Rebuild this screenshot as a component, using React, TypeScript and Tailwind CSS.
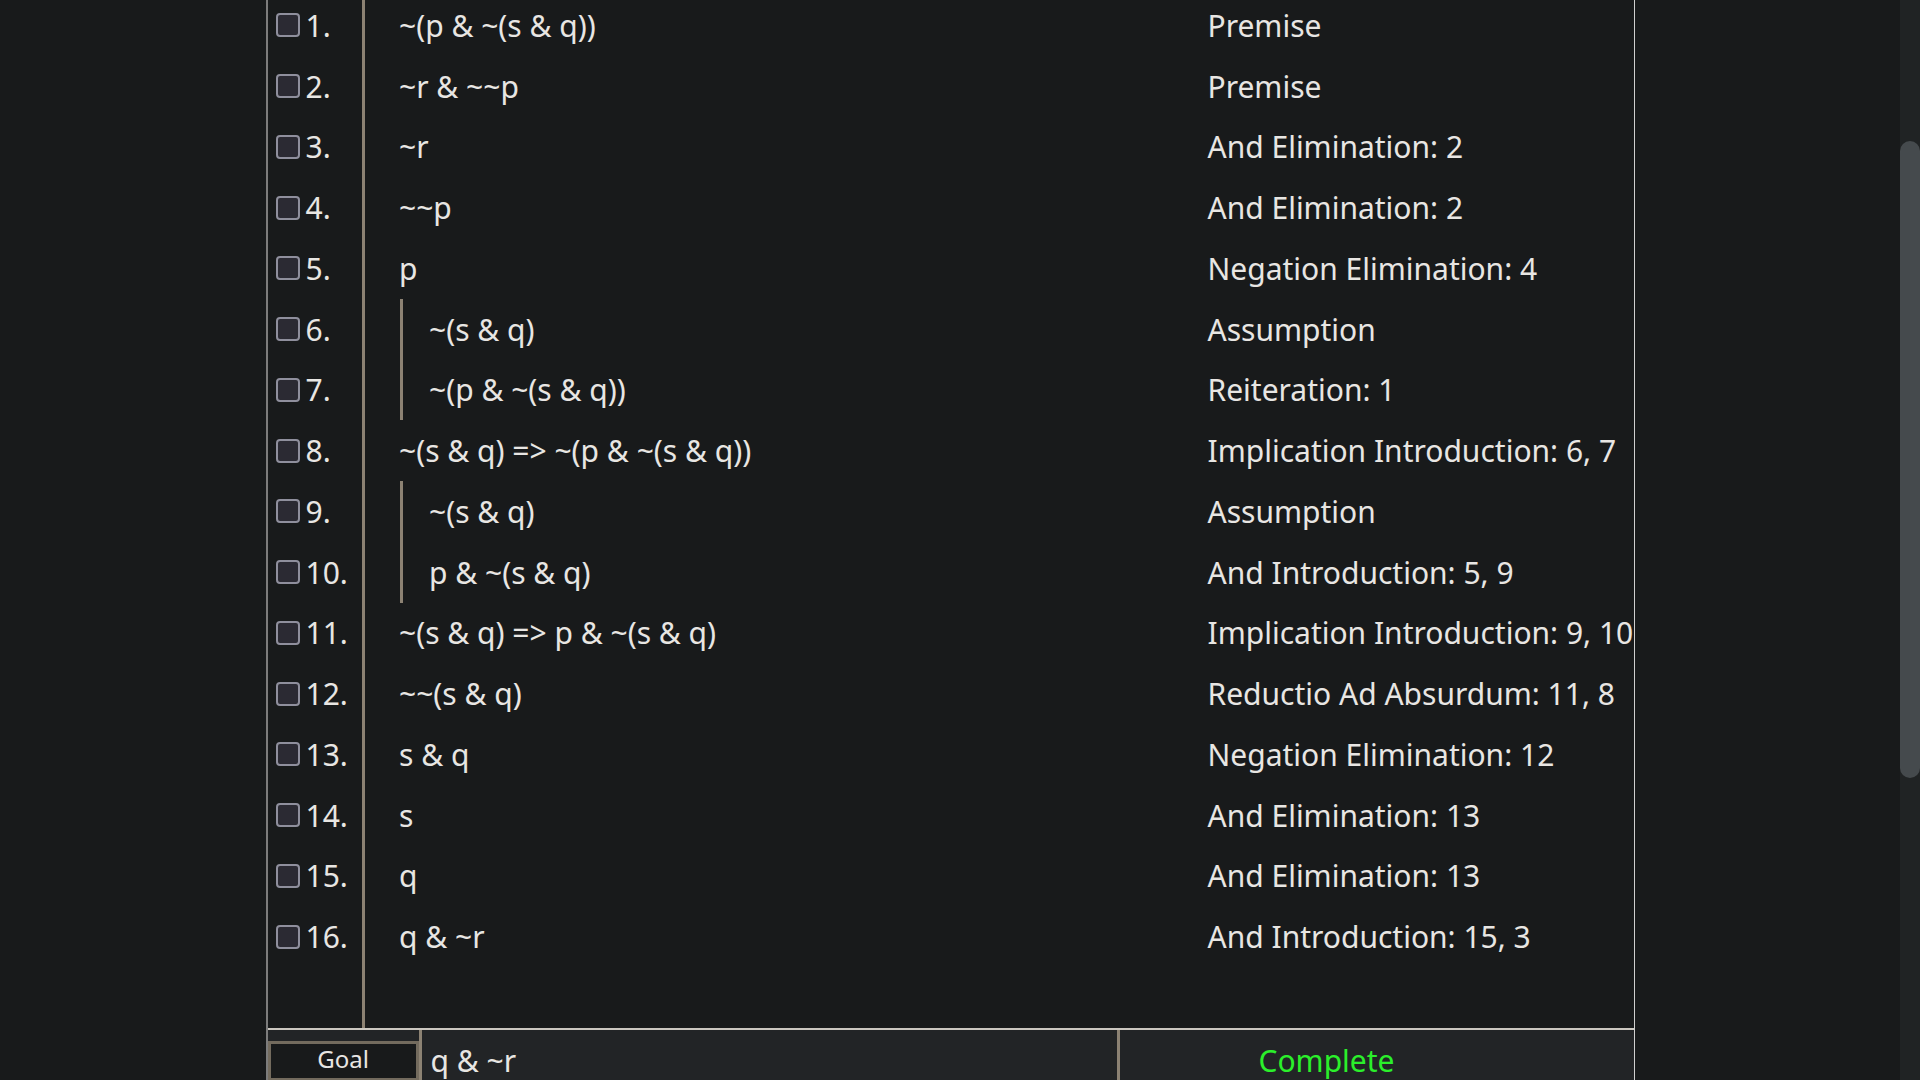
type Row = { n: number; f: string; j: string; d: number };

const rows: Row[] = [
  { n: 1, f: "~(p & ~(s & q))", j: "Premise", d: 0 },
  { n: 2, f: "~r & ~~p", j: "Premise", d: 0 },
  { n: 3, f: "~r", j: "And Elimination: 2", d: 0 },
  { n: 4, f: "~~p", j: "And Elimination: 2", d: 0 },
  { n: 5, f: "p", j: "Negation Elimination: 4", d: 0 },
  { n: 6, f: "~(s & q)", j: "Assumption", d: 1 },
  { n: 7, f: "~(p & ~(s & q))", j: "Reiteration: 1", d: 1 },
  { n: 8, f: "~(s & q) => ~(p & ~(s & q))", j: "Implication Introduction: 6, 7", d: 0 },
  { n: 9, f: "~(s & q)", j: "Assumption", d: 1 },
  { n: 10, f: "p & ~(s & q)", j: "And Introduction: 5, 9", d: 1 },
  { n: 11, f: "~(s & q) => p & ~(s & q)", j: "Implication Introduction: 9, 10", d: 0 },
  { n: 12, f: "~~(s & q)", j: "Reductio Ad Absurdum: 11, 8", d: 0 },
  { n: 13, f: "s & q", j: "Negation Elimination: 12", d: 0 },
  { n: 14, f: "s", j: "And Elimination: 13", d: 0 },
  { n: 15, f: "q", j: "And Elimination: 13", d: 0 },
  { n: 16, f: "q & ~r", j: "And Introduction: 15, 3", d: 0 },
];

function ProofRow({ r }: { r: Row }) {
  return (
    <div className="flex h-[60.75px]">
      <div className="flex w-[97px] shrink-0 items-center border-r-[3px] border-[#8c8273] pl-[8px]">
        <input
          type="checkbox"
          className="h-6 w-6 shrink-0 appearance-none rounded-[4px] border-2 border-[#8f8f9d] bg-[#2b2a33]"
        />
        <span className="ml-[6px]">{r.n}.</span>
      </div>
      <div className="flex w-[843px] shrink-0">
        {r.d === 0 ? (
          <div className="flex items-center whitespace-pre pl-[34.5px]">{r.f}</div>
        ) : (
          <div className="ml-[35px] flex items-center whitespace-pre border-l-[3px] border-[#8c8273] pl-[26.5px]">
            {r.f}
          </div>
        )}
      </div>
      <div className="flex flex-1 items-center whitespace-pre">{r.j}</div>
    </div>
  );
}

export default function App() {
  return (
    <div className="flex h-screen overflow-hidden bg-[#181a1b] text-[30px] text-[#e8e6e3] [font-family:'Noto_Sans',sans-serif]">
      <main className="min-w-0 flex-1 overflow-hidden">
        <div className="-mt-[5px] mx-auto w-[1369px] border-l-2 border-r border-l-[#7c7c7c] border-r-[#cfcfcf]">
          {rows.map((r) => (
            <ProofRow key={r.n} r={r} />
          ))}
          <div className="flex h-[60.75px]">
            <div className="w-[97px] shrink-0 border-r-[3px] border-[#8c8273]" />
          </div>
          <div className="flex h-[80px] border-t-2 border-[#cbc7c0] bg-[#222426]">
            <div className="w-[151px] shrink-0 pt-[11px]">
              <div className="h-[40px] border-[3px] border-[#736b5e] bg-[#181a1b] text-center text-[24px] leading-[29px]">
                Goal
              </div>
            </div>
            <div className="w-[698px] shrink-0 whitespace-pre border-l-[3px] border-[#8c8273] pl-[9px] pt-[11px] leading-[40px]">
              q &amp; ~r
            </div>
            <div className="flex-1 border-l-[3px] border-[#8c8273] pl-[139px] pt-[11px] leading-[40px] text-[#2bef2b]">
              Complete
            </div>
          </div>
        </div>
      </main>
      <aside className="flex w-[20px] shrink-0 flex-col bg-[#202324] pt-[141px]">
        <div className="h-[637px] rounded-[10px] bg-[#454a4d]" />
      </aside>
    </div>
  );
}
